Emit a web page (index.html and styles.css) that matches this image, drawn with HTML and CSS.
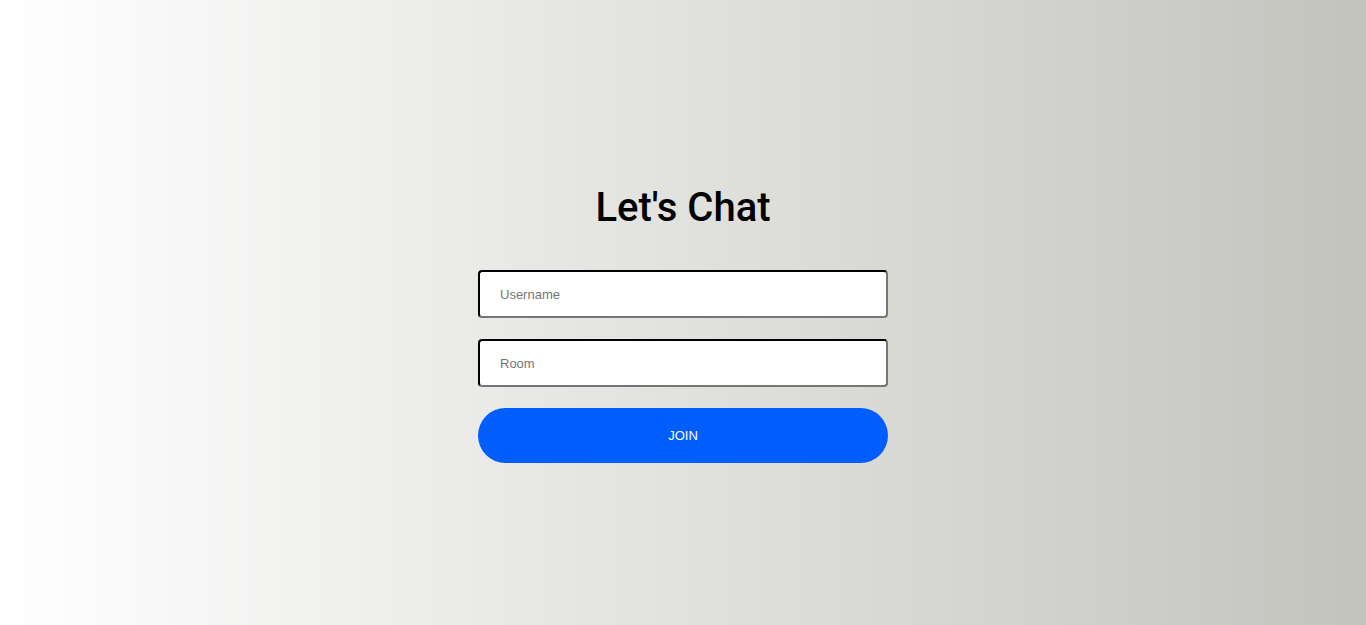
FILE: index.html
```html
<!DOCTYPE html>
<html lang="en">
<head>
<meta charset="utf-8">
<title>Let's Chat</title>
<link rel="stylesheet" href="styles.css">
</head>
<body>
<main class="page">
  <form class="join-form">
    <h1 class="title">Let's Chat</h1>
    <input class="field" type="text" placeholder="Username">
    <input class="field" type="text" placeholder="Room">
    <button class="join-btn" type="button">JOIN</button>
  </form>
</main>
</body>
</html>
```
FILE: styles.css
```css
html, body {
  margin: 0;
  padding: 0;
}
body {
  font-family: Roboto, "Liberation Sans", Arial, sans-serif;
}
.page {
  min-height: 100vh;
  box-sizing: border-box;
  background: linear-gradient(to right, #ffffff 0%, #c3c3be 100%);
  display: flex;
  justify-content: center;
  padding-top: 184px;
}
.join-form {
  width: 410px;
  display: flex;
  flex-direction: column;
}
.title {
  margin: 0 0 38px;
  font-family: Roboto, sans-serif;
  font-weight: 500;
  font-size: 40px;
  line-height: 48px;
  text-align: center;
  color: #000;
}
.field {
  box-sizing: border-box;
  height: 48px;
  width: 100%;
  margin: 0 0 21px;
  padding: 0 20px;
  border: 2px inset #767676;
  border-top-color: #1b1b1b;
  border-left-color: #1b1b1b;
  border-radius: 4px;
  background: #fff;
  font-family: "Liberation Sans", Arial, sans-serif;
  font-size: 13px;
  color: #000;
  outline: none;
}
.field::placeholder {
  color: #757575;
}
.join-btn {
  height: 55px;
  width: 100%;
  border: none;
  border-radius: 28px;
  background: #005eff;
  color: #fff;
  font-family: "Liberation Sans", Arial, sans-serif;
  font-size: 13px;
  cursor: pointer;
}
```
